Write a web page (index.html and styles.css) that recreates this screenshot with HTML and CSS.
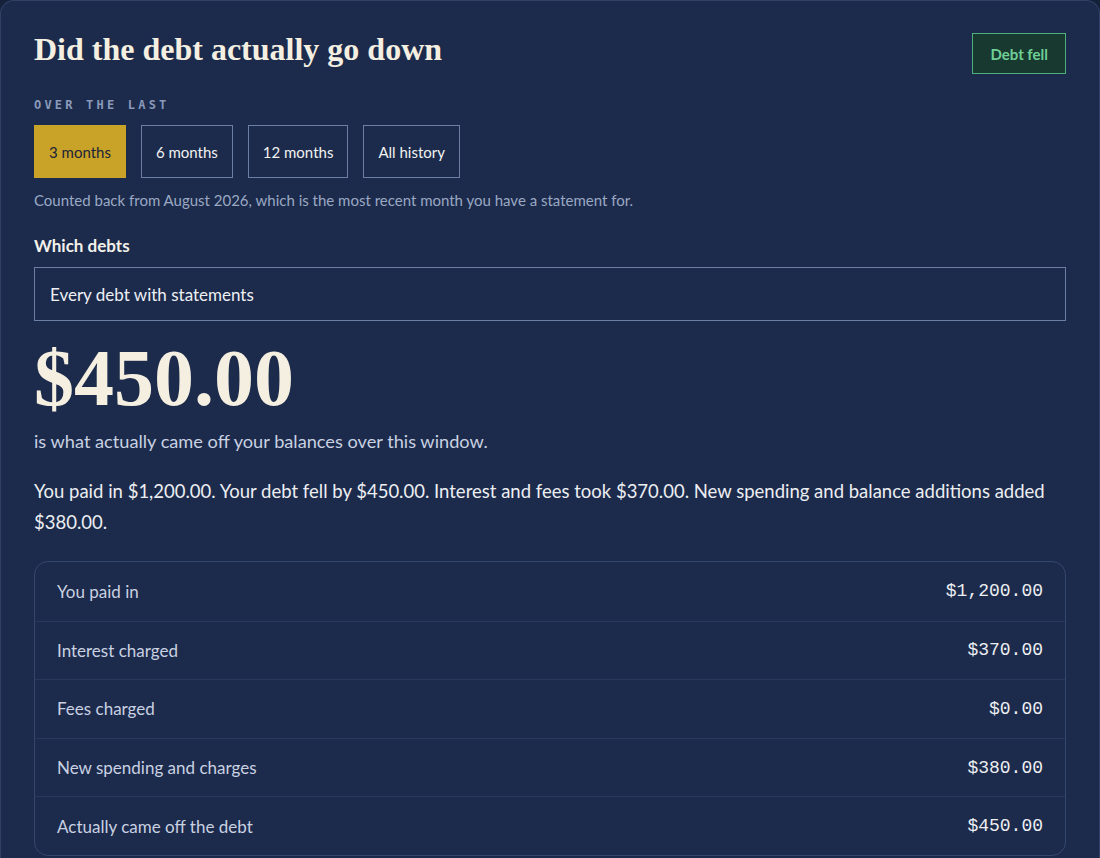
FILE: index.html
```html
<!DOCTYPE html>
<html lang="en">
<head>
<meta charset="utf-8">
<title>Did the debt actually go down</title>
<link rel="stylesheet" href="styles.css">
</head>
<body>
<main class="card">
  <div class="head">
    <h1 class="title">Did the debt actually go down</h1>
    <span class="badge">Debt fell</span>
  </div>
  <div class="eyebrow">OVER THE LAST</div>
  <div class="ranges">
    <button class="range active">3 months</button>
    <button class="range">6 months</button>
    <button class="range">12 months</button>
    <button class="range">All history</button>
  </div>
  <p class="hint">Counted back from August 2026, which is the most recent month you have a statement for.</p>
  <div class="field-label">Which debts</div>
  <div class="select">Every debt with statements</div>
  <div class="big">$450.00</div>
  <p class="lead">is what actually came off your balances over this window.</p>
  <p class="summary">You paid in $1,200.00. Your debt fell by $450.00. Interest and fees took $370.00. New spending and balance additions added $380.00.</p>
  <div class="table">
    <div class="row"><span class="label">You paid in</span><span class="val">$1,200.00</span></div>
    <div class="row"><span class="label">Interest charged</span><span class="val">$370.00</span></div>
    <div class="row"><span class="label">Fees charged</span><span class="val">$0.00</span></div>
    <div class="row"><span class="label">New spending and charges</span><span class="val">$380.00</span></div>
    <div class="row"><span class="label">Actually came off the debt</span><span class="val">$450.00</span></div>
  </div>
</main>
</body>
</html>
```
FILE: styles.css
```css
* { box-sizing: border-box; }
html, body { margin: 0; padding: 0; }
body {
  background: #15213a;
  font-family: "Lato", "Noto Sans", sans-serif;
  color: #e6e9f0;
  height: 858px;
  overflow: hidden;
}
.card {
  background: #1c2b4b;
  border: 1px solid #2f4266;
  border-bottom: none;
  border-radius: 14px 14px 0 0;
  min-height: 900px;
  padding: 28px 33px 0 33px;
}
.head {
  display: flex;
  justify-content: space-between;
  align-items: flex-start;
}
.title {
  margin: 0;
  font-family: "Liberation Serif", serif;
  font-weight: 700;
  font-size: 32px;
  line-height: 40px;
  color: #f4efe1;
}
.badge {
  margin-top: 4px;
  height: 41px;
  display: flex;
  align-items: center;
  padding: 0 17px;
  background: #17392f;
  border: 1px solid #4caf7c;
  color: #6fcf97;
  font-size: 15px;
  font-weight: 700;
}
.eyebrow {
  margin-top: 23px;
  font-family: "DejaVu Sans Mono", monospace;
  font-size: 12px;
  font-weight: 700;
  line-height: 16px;
  letter-spacing: 3.2px;
  color: #8a99ba;
}
.ranges {
  display: flex;
  gap: 15px;
  margin-top: 12px;
}
.range {
  height: 53px;
  padding: 0 14px;
  font-family: inherit;
  font-size: 15px;
  background: transparent;
  border: 1px solid #6c7fa4;
  color: #f1f1f1;
  cursor: pointer;
}
.range.active {
  background: #c9a228;
  border-color: #c9a228;
  color: #1c2438;
}
.hint {
  margin: 12px 0 0;
  font-size: 15px;
  line-height: 20px;
  color: #9aa8c4;
}
.field-label {
  margin-top: 25px;
  font-size: 17px;
  font-weight: 700;
  line-height: 22px;
  color: #f3f1ea;
}
.select {
  margin-top: 10px;
  height: 54px;
  display: flex;
  align-items: center;
  padding: 0 15px;
  border: 1px solid #6c7fa4;
  font-size: 17px;
  color: #eef0f4;
}
.big {
  margin-top: 18px;
  font-family: "Liberation Serif", serif;
  font-weight: 700;
  font-size: 80px;
  line-height: 78px;
  color: #f4efe1;
}
.lead {
  margin: 11px 0 0;
  font-size: 18.2px;
  line-height: 26px;
  color: #c9d1e2;
}
.summary {
  margin: 22px 0 0;
  font-size: 18.5px;
  line-height: 31px;
  color: #eceef2;
}
.table {
  margin-top: 23px;
  border: 1px solid #34476d;
  border-radius: 14px;
}
.row {
  display: flex;
  justify-content: space-between;
  align-items: center;
  height: 58.6px;
  padding: 0 22px;
  border-top: 1px solid #27395c;
}
.row:first-child { border-top: none; }
.label {
  font-size: 17px;
  color: #c9d1e2;
}
.val {
  font-family: "Liberation Mono", monospace;
  font-size: 18px;
  color: #eceef2;
}
```
